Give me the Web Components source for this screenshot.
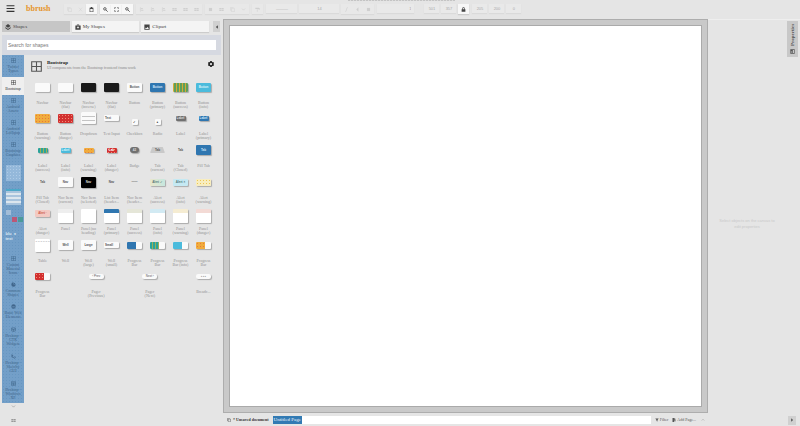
<!DOCTYPE html>
<html lang="en">
<head>
<meta charset="utf-8">
<title>bbrush</title>
<style>
html,body{margin:0;height:100%}
body{background:#e5e5e5;color:#333;font:5px/6px "Liberation Serif",serif;overflow:hidden}
</style>
</head>
<body>
<pencil-app></pencil-app>
<script>
const ICONS={
 menu:'<path d="M1 2h14v2H1zM1 7h14v2H1zM1 12h14v2H1z"/>',
 grid:'<path fill="none" stroke="currentColor" stroke-width="1.6" d="M1 1h14v14H1zM8 1v14M1 8h14"/>',
 copy:'<path fill="none" stroke="currentColor" stroke-width="1.5" d="M5 4h9v11H5zM2 12V1h9"/>',
 cut:'<path fill="none" stroke="currentColor" stroke-width="1.5" d="M3 2l10 12M13 2L3 14"/>',
 paste:'<path fill-rule="evenodd" d="M2 2h3l1-2h4l1 2h3v14H2zM4 6v8h8V6z"/>',
 zoom:'<path fill="none" stroke="currentColor" stroke-width="2.6" d="M10 6a4 4 0 1 1-8 0a4 4 0 0 1 8 0M9 9l6 6"/>',
 fit:'<path fill="none" stroke="currentColor" stroke-width="2" d="M2 6V2h4M10 2h4v4M14 10v4h-4M6 14H2v-4"/>',
 layers:'<path d="M8 0l7 5-7 5-7-5zM1 8l7 5 7-5v3l-7 5-7-5z"/>',
 case:'<path fill-rule="evenodd" d="M5 4V1h6v3h4v11H1V4zM6.500 4h3V2.500h-3zM7 6v2H5v2h2v2h2v-2h2V8H9V6z"/>',
 image:'<path fill-rule="evenodd" d="M1 1h14v14H1zM3 13h10L10 7l-3 4-2-2z"/>',
 gear:'<path fill-rule="evenodd" d="M6 0h4l.5 2 2 1 2-.5L16 6l-1.500 2L16 10l-1.500 3.500-2-.5-2 1L10 16H6l-.5-2-2-1-2 .5L0 10l1.500-2L0 6l1.500-3.500 2 .5 2-1zM8 5a3 3 0 1 0 0 6a3 3 0 0 0 0-6"/>',
 lock:'<path fill-rule="evenodd" d="M4 7V5a4 4 0 0 1 8 0v2h2v8H2V7zM6 7h4V5a2 2 0 0 0-4 0z"/>',
 align:'<path d="M3 1h2v14H3zM7 3h5v3H7zM7 9h7v3H7z"/>',
 square:'<path d="M3 3h10v10H3z"/>',
 brush:'<path d="M1 2h12v4H1zM13 3h2v6H8v6H6V8h7z"/>',
 slash:'<path d="M10 1h2L6 15H4z"/>',
 left:'<path d="M11 1v14L4 8z"/>',
 right:'<path d="M5 1v14l7-7z"/>',
 down:'<path fill="none" stroke="currentColor" stroke-width="2" d="M3 5l5 5 5-5"/>',
 up:'<path fill="none" stroke="currentColor" stroke-width="2" d="M3 10l5-5 5 5"/>',
 rows:'<path d="M1 3h6v4H1zM8 3h7v4H8zM1 9h6v4H1zM8 9h7v4H8z"/>',
 ball:'<path fill-rule="evenodd" d="M8 1a7 7 0 1 0 0 14A7 7 0 0 0 8 1M4 6h8v1H4zM4 9h8v1H4z"/>',
 pie:'<path d="M8 1a7 7 0 1 0 7 7H8z"/><path d="M9 2a5 5 0 0 1 5 5H9z"/>',
 cube:'<path fill="none" stroke="currentColor" stroke-width="1.600" d="M1 4l7-3 7 3v8l-7 3-7-3zM1 4l7 3 7-3M8 7v8M1 9h14"/>',
 pen:'<path fill="none" stroke="currentColor" stroke-width="2.400" d="M3 1v9h4l4 4 3-4-3-2M3 5h4"/>',
 windows:'<path fill="none" stroke="currentColor" stroke-width="1.600" d="M1 2h14v12H1zM1 6h14M8 6v8M1 10h14"/>',
 filter:'<path d="M1 2h14l-5 6v6l-4-2V8z"/>',
 page:'<path d="M2 0h7v5h5v5H9v6H2zM10 0l4 4h-4zM11 11h4v2h-4z"/>',
 panel:'<path fill-rule="evenodd" d="M1 1h14v14H1zM3 3v10h4V3zM9 4v2h4V4zM9 8v2h4V8z"/>'
};
const define=(name,html,init)=>{
 const t=document.createElement('template');t.innerHTML=html;
 customElements.define(name,class extends HTMLElement{
  connectedCallback(){
   if(this.shadowRoot)return;
   this.attachShadow({mode:'open'}).append(t.content.cloneNode(true));
   if(init)init.call(this,this.shadowRoot);
  }
 });
};
const BUTTON='button{font:inherit;color:inherit;background:none;border:0;padding:0;margin:0;display:flex;align-items:center;justify-content:center}';

define('p-icon','<style>:host{display:inline-flex;flex:none;width:var(--icon,6px);height:var(--icon,6px)}svg{width:100%;height:100%;fill:currentColor}</style><svg viewBox="0 0 16 16" aria-hidden="true"></svg>',
 function(r){r.querySelector('svg').innerHTML=ICONS[this.getAttribute('name')]});

define('tool-button',`<style>:host{display:flex;width:11px;height:10px;color:#cfcfcf}:host([active]){color:#444;background:#f7f7f7;box-shadow:0 1px 1px #ccc}
${BUTTON}button{width:100%;height:100%}</style><button type="button"><p-icon></p-icon></button>`,
 function(r){const n=this.getAttribute('icon');r.querySelector('button').setAttribute('aria-label',n);
  const i=document.createElement('p-icon');i.setAttribute('name',n);r.querySelector('p-icon').replaceWith(i)});

define('tool-bar',`<style>
:host{display:flex;align-items:flex-start;height:20px;background:repeating-linear-gradient(90deg,#c4c4c4 0 2px,#dcdcdc 2px 3px) 348px 0/107px 1px no-repeat #e5e5e5;box-sizing:border-box;padding:4px 5px 0;overflow:hidden;--icon:5px}
.menu{--icon:9px;width:11px;height:8px;color:#333}${BUTTON}
h1{margin:0 14px 0 10px;font:bold 8px/9px "Liberation Serif",serif;color:#e6952c}
.g{display:flex;background:#e8e8e8;box-shadow:0 1px 1px #dadada;margin-right:3px}
input{font:4px/8px "Liberation Sans",sans-serif;color:#aaa;background:#e9e9e9;border:0;padding:0;width:15px;height:9px;text-align:center;margin-right:2px;box-shadow:0 1px 1px #dadada}
.w{width:31px}.s{width:40px}.n{width:34px;text-align:right;margin-right:10px;padding-right:3px}
</style>
<button class="menu" type="button" aria-label="Menu"><p-icon name="menu"></p-icon></button><h1>bbrush</h1>
<div class="g"><tool-button icon="copy"></tool-button><tool-button icon="cut"></tool-button><tool-button icon="paste" active></tool-button></div>
<div class="g"><tool-button icon="zoom" active></tool-button><tool-button icon="fit" active></tool-button><tool-button icon="zoom" active></tool-button></div>
<div class="g"><tool-button icon="align"></tool-button><tool-button icon="align"></tool-button><tool-button icon="align"></tool-button><tool-button icon="rows"></tool-button><tool-button icon="rows"></tool-button><tool-button icon="rows"></tool-button></div>
<div class="g"><tool-button icon="square"></tool-button><tool-button icon="rows"></tool-button><tool-button icon="copy"></tool-button><tool-button icon="down"></tool-button></div>
<div class="g"><tool-button icon="brush"></tool-button></div>
<input class="w" aria-label="Font" value="———"><input class="s" aria-label="Font size" value="14">
<div class="g"><tool-button icon="slash"></tool-button><tool-button icon="left"></tool-button><tool-button icon="square"></tool-button></div>
<input class="n" aria-label="Stroke" value="1"><input aria-label="X" value="501"><input aria-label="Y" value="357">
<div class="g"><tool-button icon="lock" active></tool-button></div>
<input aria-label="Width" value="205"><input aria-label="Height" value="200"><input aria-label="Angle" value="0">`);

define('collection-tab',`<style>:host{flex:1;display:flex;--icon:6px}${BUTTON}
button{flex:1;height:11px;justify-content:flex-start;gap:2px;padding-left:3px;background:#f4f4f4;box-shadow:0 1px 1px #ccc;color:#444;line-height:6px}
:host([active]) button{background:#c6c6c6;box-shadow:none}</style><button type="button"><slot name="icon"></slot><slot></slot></button>`);

define('category-item',`<style>:host{display:block;height:var(--h,22px);flex:none;color:#41668b;--icon:5px}
:host([selected]){background:#efefef;color:#333}${BUTTON}
button{width:100%;height:100%;flex-direction:column;justify-content:flex-start;padding-top:3px;gap:2px;font-size:4px;line-height:4px;text-align:center;white-space:pre-line}
</style><button type="button"><slot name="icon"></slot><slot></slot></button>`);

define('category-preview',`<style>:host{display:flex;flex:none;justify-content:center;height:var(--h,22px);box-sizing:border-box;padding-top:2px}
div{width:15px}
.a{height:16px;background:#94b8da;background-image:radial-gradient(#aecbe6 30%,transparent 40%);background-size:3px 3px}
.b{height:16px;background:repeating-linear-gradient(#a9c4dd 0 2px,#dce6ee 2px 4px);border-top:2px solid #4ea8c8;box-sizing:border-box}
.c{display:grid;grid-template-columns:5px 5px 5px;gap:2px 1px;height:12px}
.c i:nth-child(1){background:#a3bdd7}.c i:nth-child(5){background:#bb5877}.c i:nth-child(6){background:#4b9a99}
.d{height:10px;font:bold 4px/5px "Liberation Sans",sans-serif;color:#dce8f3}
</style><div></div>`,function(r){const k=this.getAttribute('kind'),d=r.querySelector('div');d.className=k;
 if(k==='c')d.innerHTML='<i></i><i></i><i></i><i></i><i></i><i></i>';
 if(k==='d')d.innerHTML='blu &nbsp;●<br>text'});

define('category-rail',`<style>:host{display:flex;flex-direction:column;width:22px;flex:none;margin-left:2px}
nav{background:#739fc8;background-image:radial-gradient(#6796c1 20%,transparent 30%);background-size:3px 3px;flex:0 1 348px;overflow:hidden;display:flex;flex-direction:column}
${BUTTON}.f{flex:1;display:flex;flex-direction:column;align-items:center;justify-content:space-between;padding:1px 0 3px;color:#333;--icon:6px}.f :first-child{color:#999;--icon:5px}
</style><nav aria-label="Collections"></nav><div class="f"><button type="button" aria-label="More collections"><p-icon name="down"></p-icon></button><button type="button" aria-label="Manage collections"><p-icon name="rows"></p-icon></button></div>`,
function(r){
 const rows=[['grid','Twitter\nTypeo',22],['grid','Bootstrap',18,1],['grid','Android\nAssets',22],['grid','Android\nLollipop',22],['grid','Bootstrap\nGraphics',24],['a',,24],['b',,21],['c',,21],['d',,24],['grid','Custom\nMaterial\nIcons',26],['pie','Common\nShapes',22],['ball','Basic Web\nElements',23],['cube','Desktop -\nGTK\nWidgets',27],['pen','Desktop -\nSketchy\nGUI',27],['windows','Desktop -\nWindows\nXP',23]];
 r.querySelector('nav').innerHTML=rows.map(([i,t,h,s])=>t?`<category-item style="--h:${h}px"${s?' selected':''}><p-icon slot="icon" name="${i}"></p-icon>${t}</category-item>`:`<category-preview kind="${i}" style="--h:${h}px"></category-preview>`).join('');
});

define('shape-item',`<style>
:host{display:block;min-width:0;width:23px}${BUTTON}
button{flex-direction:column;width:100%;color:#929292}
.t{height:16px;display:flex;align-items:center;justify-content:center;margin-bottom:6px}
:host([low]) .t{align-items:flex-end;height:18px;margin-bottom:4px}
.l{font:4px/4px "Liberation Serif",serif;white-space:pre-line;text-align:center;height:9px}
.s{box-sizing:border-box;width:15px;height:9px;border-radius:1px;background:#fafafa;box-shadow:1px 1px 1px #aaa;font:bold 3px/9px "Liberation Sans",sans-serif;color:#555;text-align:center;overflow:hidden}
.black{background:#1a1a1a;color:#ddd}.jet{background:#000;color:#ddd;height:11px;line-height:11px}
.blue{background:#2f76b0;color:#cfe6fa}.cyan{background:#4bbbdc;color:#d9f4fb}
.green{background:repeating-linear-gradient(90deg,#d5a935 0 1px,#5f9f5a 1px 3px)}
.teal{background:repeating-linear-gradient(90deg,#2aa39a 0 2px,#9aae58 2px 3px)}
.orange{background:radial-gradient(#e9793a 25%,#f0ac3d 40%);background-size:3px 3px}
.red{background:radial-gradient(#f28a77 20%,#d2302f 40%);background-size:3px 3px;color:#fff}
.small{width:10px;height:5px;line-height:5px}.grey{background:#707070;color:#ddd}
.round{border-radius:3px;width:9px;height:6px;line-height:6px}
.input{height:6px;line-height:6px;text-align:left;padding-left:1px}
.list{height:12px;background:repeating-linear-gradient(#fafafa 0 3px,#c4c4c4 3px 4px);border:1px solid #fafafa}
.box{width:6px;height:6px;line-height:6px;margin-top:8px;color:#111}
.none{background:none;box-shadow:none}
.tab{clip-path:polygon(15% 0,85% 0,100% 100%,0 100%);height:6px;line-height:6px;background:#c9c9c9;box-shadow:none}
.nav{height:10px;line-height:10px}
.alert{height:7px;line-height:7px;color:#577}
.ag{background:linear-gradient(90deg,#e9e6ca,#c6e7df)}.ai{background:#c5e9f3}.aw{background:radial-gradient(#edc654 20%,#f8edbf 40%);background-size:3px 3px}.ad{background:#f3c9c2;color:#c54}
.p{height:14px;background:linear-gradient(var(--c,#eee) 4px,#fff 4px)}
.table{height:13px;line-height:4px;background:#fff;font-weight:normal}
.prog{height:7px;display:flex}.prog i{width:9px}
.pill{height:5px;line-height:5px;border-radius:2px;font-weight:normal}
</style><button type="button"><span class="t"><span class="s"></span></span><span class="l"><slot></slot></span></button>`,
function(r){const s=r.querySelector('.s');const k=this.getAttribute('kind');s.className='s '+k;
 if(k==='prog')s.innerHTML=`<i class="${this.getAttribute('fill')}"></i>`;else s.textContent=this.getAttribute('text')||'';
 const c=this.getAttribute('head');if(c)s.style.setProperty('--c',c)});

define('shape-grid',`<style>:host{display:block}
.g{display:grid;grid-template-columns:repeat(8,1fr);justify-items:center;grid-template-rows:31px 32px 32px 31px 32px 31px}
.e{display:flex;justify-content:space-between}</style><div class="g"></div><div class="e"></div>`,
function(r){
 const items=[
 ['','Navbar'],['','Navbar\n(flat)'],['black','Navbar\n(inverse)'],['black','Navbar\n(flat)'],['','Button','Button'],['blue','Button\n(primary)','Button'],['green','Button\n(success)'],['cyan','Button\n(info)','Button'],
 ['orange','Button\n(warning)'],['red','Button\n(danger)'],['list','Dropdown'],['input','Text Input','Text'],['box','Checkbox','✓'],['box','Radio','●'],['small grey','Label','Label'],['small blue','Label\n(primary)','Label'],
 ['small teal','Label\n(success)'],['small cyan','Label\n(info)','Label'],['small orange','Label\n(warning)'],['small red','Label\n(danger)','Lab'],['round grey','Badge','42'],['tab','Tab\n(current)','Tab'],['none','Tab\n(Closed)','Tab'],['nav blue','Pill Tab','Tab'],
 ['none','Pill Tab\n(Closed)','Tab'],['nav','Nav Item\n(current)','Nav'],['jet','Nav Item\n(selected)','Nav'],['none','List Item\n(header...','Nav'],['none','Nav Item\n(header...','——'],['alert ag','Alert\n(success)','Alert ✓'],['alert ai','Alert\n(info)','Alert ×'],['alert aw','Alert\n(warning)'],
 ['alert ad','Alert\n(danger)','Alert ·'],['p','Panel'],['p','Panel (no\nheading)',,'#ffffff'],['p','Panel\n(primary)',,'#2f76b0'],['p','Panel\n(success)',,'#e5e6d8'],['p','Panel\n(info)',,'#d2eaf3'],['p','Panel\n(warning)',,'#f5ecd2'],['p','Panel\n(danger)',,'#f3dad5'],
 ['table','Table','– – – – – –'],['nav','Well','Well'],['nav','Well\n(large)','Large'],['input','Well\n(small)','Small'],['prog','Progress\nBar','blue'],['prog','Progress\nBar','teal'],['prog','Progress\nBar (info)','cyan'],['prog','Progress\nBar','orange'],
 ['prog','Progress\nBar','red'],['pill','Pager\n(Previous)','‹ Prev'],['pill','Pager\n(Next)','Next ›'],['pill','Breadc...','▪ ▪ ▪']];
 const make=([k,l,t,h])=>`<shape-item kind="${k}" ${k==='p'?'low':''} ${k==='prog'?'fill':'text'}="${t||''}" ${h?`head="${h}"`:''}>${l}</shape-item>`;
 r.querySelector('.g').innerHTML=items.slice(0,48).map(make).join('');
 r.querySelector('.e').innerHTML=items.slice(48).map(make).join('');
});

define('shape-panel',`<style>
:host{display:flex;flex-direction:column;min-height:0;background:#e5e5e5}
.tabs{display:flex;gap:2px;padding:2px 3px 3px 2px;align-items:center}
${BUTTON}.c{width:7px;height:11px;margin-left:2px;background:#d0d0d0;--icon:4px}
.search{background:#d6d9e1;padding:5px 5px;margin:0 2px;display:flex}
input{flex:1;min-width:0;height:10px;box-sizing:border-box;border:0;background:#fff;padding:0 1px;font:5px/9px "Liberation Sans",sans-serif;color:#444}
input::placeholder{color:#777}
.body{flex:1;display:flex;min-height:0}
.shapes{flex:1;padding:6px 8px 0 7px;min-width:0}
header{display:flex;align-items:flex-start;height:18px;--icon:11px;color:#555}
header>div{flex:1;margin-left:5px;margin-top:-1px}
h2{margin:0;font:bold 5px/5px "Liberation Serif",serif;color:#222}p{margin:0;font-size:4px;line-height:5px;color:#888;white-space:nowrap}
header button{--icon:6px;color:#222;margin-right:1px}
</style>
<div class="tabs"><collection-tab active><p-icon slot="icon" name="layers"></p-icon>Shapes</collection-tab><collection-tab><p-icon slot="icon" name="case"></p-icon>My Shapes</collection-tab><collection-tab><p-icon slot="icon" name="image"></p-icon>Clipart</collection-tab><button class="c" type="button" aria-label="Collapse"><p-icon name="left"></p-icon></button></div>
<div class="search"><input type="search" placeholder="Search for shapes" aria-label="Search for shapes"></div>
<div class="body"><category-rail></category-rail><section class="shapes"><header><p-icon name="grid"></p-icon><div><h2>Bootstrap</h2><p>UI components from the Bootstrap frontend framework</p></div><button type="button" aria-label="Settings"><p-icon name="gear"></p-icon></button></header><shape-grid></shape-grid></section></div>`);

define('drawing-canvas',`<style>:host{display:flex;box-sizing:border-box;background:#c9c9c9;border:1px solid #adadad;padding:5px;min-height:0}
div{flex:1;background:#fff;border:1px solid #aaa}</style><div><slot></slot></div>`);

define('properties-panel',`<style>:host{display:flex;position:relative;align-items:center;justify-content:center;padding-top:14px;box-sizing:border-box;border-top:1px solid #eee}
p{margin:0 14px 0 0;font:4px/6px "Liberation Sans",sans-serif;color:#c9c9c9;text-align:center}
${BUTTON}button{position:absolute;top:1px;right:2px;width:11px;height:36px;background:#c8c8c8;writing-mode:vertical-rl;transform:rotate(180deg);gap:3px;color:#555;--icon:5px;font-weight:bold}
</style><p>Select objects on the canvas to<br>edit properties</p><button type="button"><p-icon name="panel"></p-icon>Properties</button>`);

define('status-bar',`<style>:host{display:flex;align-items:center;height:13px;box-sizing:border-box;padding:1px 4px 0;gap:2px;--icon:4px;line-height:8px}
b{color:#333;font-size:4px}.tabs{flex:1;background:#fff;height:8px;display:flex;margin-left:2px}
${BUTTON}.t{background:#327ab3;color:#e9f3fb;height:8px;padding:0 1px}.a{gap:1px;color:#555;font-size:4px}.r{width:8px;height:9px;background:#d0d0d0;color:#444}
.f{margin:0 2px}.x{color:#999;margin:0 81px 0 3px}
</style><p-icon name="copy"></p-icon><b>* Unsaved document</b><div class="tabs"><button class="t" type="button">Untitled Page</button></div>
<button class="a f" type="button"><p-icon name="filter"></p-icon>Filter</button><button class="a" type="button"><p-icon name="page"></p-icon>Add Page...</button><button class="x" type="button" aria-label="Expand"><p-icon name="up"></p-icon></button><button class="r" type="button" aria-label="Collapse properties"><p-icon name="right"></p-icon></button>`);

define('pencil-app',`<style>:host{display:grid;height:100vh;grid-template:19px minmax(0,1fr) 13px / 223px minmax(0,1fr) 92px}
tool-bar{grid-column:1/-1}shape-panel{grid-row:2/4}status-bar{grid-column:2/-1}</style>
<tool-bar></tool-bar><shape-panel></shape-panel><drawing-canvas></drawing-canvas><properties-panel></properties-panel><status-bar></status-bar>`);
</script>
</body>
</html>
